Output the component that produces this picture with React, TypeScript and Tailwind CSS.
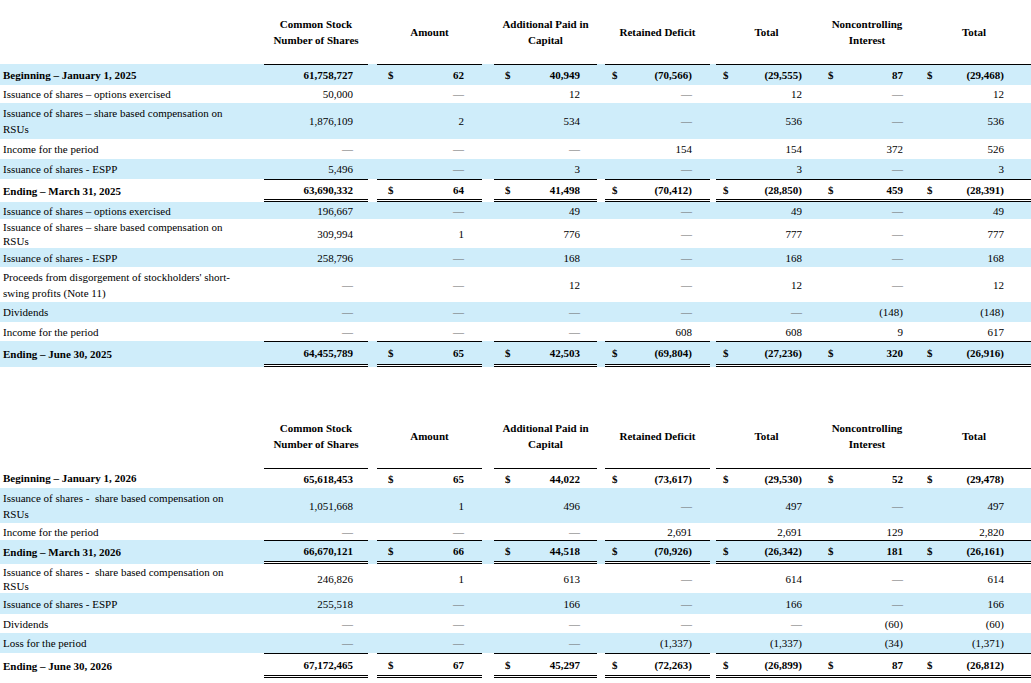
import type { ReactNode } from "react";

type Row = {
  label: ReactNode;
  vals: string[];
  h: string;
  blue?: boolean;
  bold?: boolean;
  top?: boolean;
  dbl?: boolean;
  tight?: boolean;
};

const D = "—";

const firstHalf: Row[] = [
  {
    label: "Beginning – January 1, 2025",
    vals: ["61,758,727", "62", "40,949", "(70,566)", "(29,555)", "87", "(29,468)"],
    h: "h-[21px]",
    blue: true,
    bold: true,
    top: true,
  },
  { label: "Issuance of shares – options exercised", vals: ["50,000", D, "12", D, "12", D, "12"], h: "h-[18px]" },
  {
    label: (
      <>
        Issuance of shares – share based compensation on
        <br />
        RSUs
      </>
    ),
    vals: ["1,876,109", "2", "534", D, "536", D, "536"],
    h: "h-[36px]",
    blue: true,
  },
  { label: "Income for the period", vals: [D, D, D, "154", "154", "372", "526"], h: "h-[20px]" },
  { label: "Issuance of shares - ESPP", vals: ["5,496", D, "3", D, "3", D, "3"], h: "h-[20px]", blue: true },
  {
    label: "Ending – March 31, 2025",
    vals: ["63,690,332", "64", "41,498", "(70,412)", "(28,850)", "459", "(28,391)"],
    h: "h-[23px]",
    bold: true,
    top: true,
    dbl: true,
  },
  { label: "Issuance of shares – options exercised", vals: ["196,667", D, "49", D, "49", D, "49"], h: "h-[17px]", blue: true },
  {
    label: (
      <>
        Issuance of shares – share based compensation on
        <br />
        RSUs
      </>
    ),
    vals: ["309,994", "1", "776", D, "777", D, "777"],
    h: "h-[29px]",
    tight: true,
  },
  { label: "Issuance of shares - ESPP", vals: ["258,796", D, "168", D, "168", D, "168"], h: "h-[19px]", blue: true },
  {
    label: (
      <>
        Proceeds from disgorgement of stockholders' short-
        <br />
        swing profits (Note 11)
      </>
    ),
    vals: [D, D, "12", D, "12", D, "12"],
    h: "h-[35px]",
  },
  { label: "Dividends", vals: [D, D, D, D, D, "(148)", "(148)"], h: "h-[20px]", blue: true },
  { label: "Income for the period", vals: [D, D, D, "608", "608", "9", "617"], h: "h-[19px]" },
  {
    label: "Ending – June 30, 2025",
    vals: ["64,455,789", "65", "42,503", "(69,804)", "(27,236)", "320", "(26,916)"],
    h: "h-[26px]",
    blue: true,
    bold: true,
    top: true,
    dbl: true,
  },
];

const secondHalf: Row[] = [
  {
    label: "Beginning – January 1, 2026",
    vals: ["65,618,453", "65", "44,022", "(73,617)", "(29,530)", "52", "(29,478)"],
    h: "h-[20px]",
    bold: true,
    top: true,
  },
  {
    label: (
      <>
        Issuance of shares -&nbsp; share based compensation on
        <br />
        RSUs
      </>
    ),
    vals: ["1,051,668", "1", "496", D, "497", D, "497"],
    h: "h-[35px]",
    blue: true,
  },
  { label: "Income for the period", vals: [D, D, D, "2,691", "2,691", "129", "2,820"], h: "h-[17px]" },
  {
    label: "Ending – March 31, 2026",
    vals: ["66,670,121", "66", "44,518", "(70,926)", "(26,342)", "181", "(26,161)"],
    h: "h-[24px]",
    blue: true,
    bold: true,
    top: true,
    dbl: true,
  },
  {
    label: (
      <>
        Issuance of shares -&nbsp; share based compensation on
        <br />
        RSUs
      </>
    ),
    vals: ["246,826", "1", "613", D, "614", D, "614"],
    h: "h-[29px]",
    tight: true,
  },
  { label: "Issuance of shares - ESPP", vals: ["255,518", D, "166", D, "166", D, "166"], h: "h-[21px]", blue: true },
  { label: "Dividends", vals: [D, D, D, D, D, "(60)", "(60)"], h: "h-[19px]" },
  { label: "Loss for the period", vals: [D, D, D, "(1,337)", "(1,337)", "(34)", "(1,371)"], h: "h-[20px]", blue: true },
  {
    label: "Ending – June 30, 2026",
    vals: ["67,172,465", "67", "45,297", "(72,263)", "(26,899)", "87", "(26,812)"],
    h: "h-[25px]",
    bold: true,
    top: true,
    dbl: true,
  },
];

// padding for the six "$" columns: amount, apic, retained, total, nci, total
const moneyPad = [
  "pl-[11px] pr-[18px]",
  "pl-[11px] pr-[17px]",
  "pl-[7px] pr-[18px]",
  "pl-[7px] pr-[15px]",
  "pl-[11px] pr-[14px]",
  "pl-[10px] pr-[27px]",
];

function cellCls(r: Row, bordered: boolean) {
  const cls = [r.blue ? "bg-[#cfedfa]" : "bg-white", "bg-clip-padding", "p-0", "align-middle"];
  if (bordered && r.top) cls.push("border-t border-black");
  if (bordered && r.dbl) cls.push("border-b-[3px] border-double border-black");
  return cls.join(" ");
}

// dashes are hairlines in the statement, so they read lighter than the figures
function Val({ v }: { v: string }) {
  if (v === D) return <span className="text-[#6b6b6b]">{v}</span>;
  return <span>{v}</span>;
}

function MoneyCell({ r, idx }: { r: Row; idx: number }) {
  return (
    <td className={cellCls(r, true)}>
      <div className={"flex items-center justify-between " + moneyPad[idx]}>
        <span>{r.bold ? "$" : ""}</span>
        <Val v={r.vals[idx + 1]} />
      </div>
    </td>
  );
}

function Gap({ r }: { r: Row }) {
  return <td className={cellCls(r, false)} />;
}

function Header() {
  return (
    <tr className="h-[64px] font-bold">
      <td />
      <td className="text-center align-middle">
        Common Stock
        <br />
        Number of Shares
      </td>
      <td />
      <td className="text-center align-middle">Amount</td>
      <td />
      <td className="text-center align-middle">
        Additional Paid in
        <br />
        Capital
      </td>
      <td />
      <td className="text-center align-middle">Retained Deficit</td>
      <td />
      <td className="text-center align-middle">Total</td>
      <td className="text-center align-middle">
        Noncontrolling
        <br />
        Interest
      </td>
      <td className="text-center align-middle">Total</td>
    </tr>
  );
}

function EquityTable({ rows }: { rows: Row[] }) {
  return (
    <table className="w-[1031px] table-fixed border-separate border-spacing-0 font-[Liberation_Serif,Times_New_Roman,serif]">
      <colgroup>
        <col className="w-[264px]" />
        <col className="w-[104px]" />
        <col className="w-[9px]" />
        <col className="w-[105px]" />
        <col className="w-[12px]" />
        <col className="w-[103px]" />
        <col className="w-[8px]" />
        <col className="w-[105px]" />
        <col className="w-[6px]" />
        <col className="w-[101px]" />
        <col className="w-[100px]" />
        <col className="w-[114px]" />
      </colgroup>
      <tbody>
        <Header />
        {rows.map((r, i) => (
          <tr
            key={i}
            className={r.h + (r.bold ? " font-bold" : "") + (r.tight ? " leading-[14px]" : " leading-[16px]")}
          >
            <td className={cellCls(r, false) + " pl-[3px] text-left"}>{r.label}</td>
            <td className={cellCls(r, true) + " pr-[15px] text-right"}>
              <Val v={r.vals[0]} />
            </td>
            <Gap r={r} />
            <MoneyCell r={r} idx={0} />
            <Gap r={r} />
            <MoneyCell r={r} idx={1} />
            <Gap r={r} />
            <MoneyCell r={r} idx={2} />
            <Gap r={r} />
            <MoneyCell r={r} idx={3} />
            <MoneyCell r={r} idx={4} />
            <MoneyCell r={r} idx={5} />
          </tr>
        ))}
      </tbody>
    </table>
  );
}

export default function App() {
  return (
    <div className="min-h-screen w-[1031px] bg-white font-serif text-[11px] leading-[16px] text-black">
      <EquityTable rows={firstHalf} />
      <div className="h-[37px]" />
      <EquityTable rows={secondHalf} />
    </div>
  );
}
